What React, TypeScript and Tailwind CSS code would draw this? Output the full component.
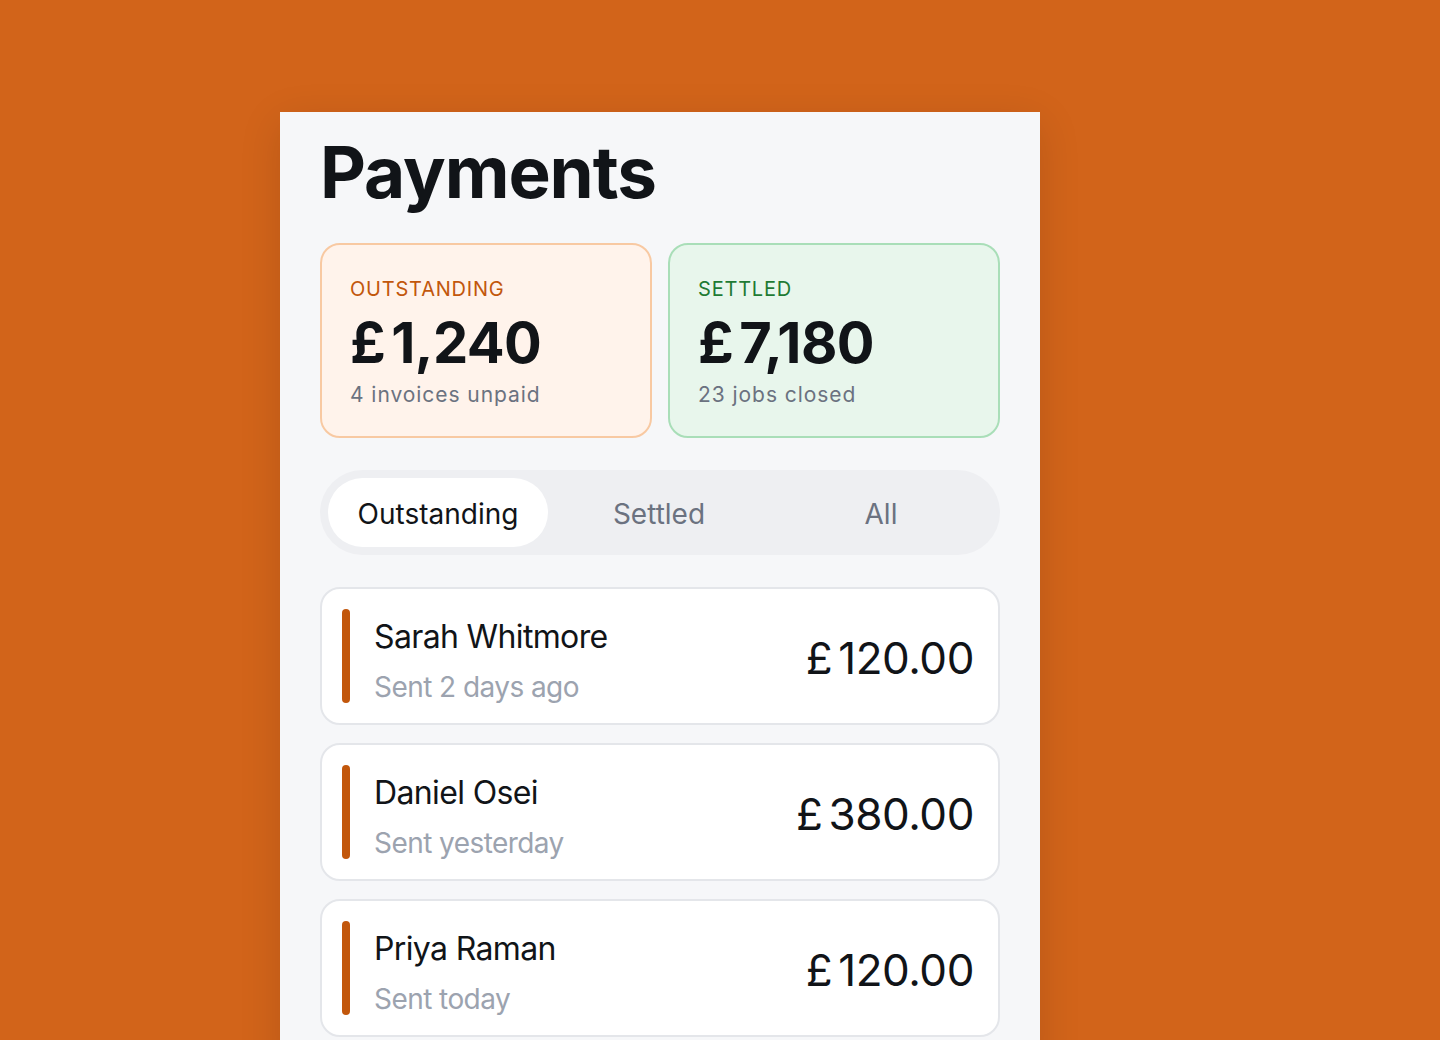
const invoices = [
  { name: "Sarah Whitmore", sent: "Sent 2 days ago", amount: "120.00" },
  { name: "Daniel Osei", sent: "Sent yesterday", amount: "380.00" },
  { name: "Priya Raman", sent: "Sent today", amount: "120.00" },
];

export default function App() {
  return (
    <div
      className="w-[1440px] h-[1040px] overflow-hidden bg-[#D2641A] pt-[112px] pl-[280px]"
      style={{ fontFamily: "Inter, 'Noto Sans', sans-serif" }}
    >
      <div className="w-[760px] h-[960px] bg-[#F6F7F9] px-10 shadow-[0_10px_40px_rgba(0,0,0,0.12)]">
        <h1 className="pt-[20px] text-[71px] leading-[80px] font-bold tracking-[-0.015em] text-[#111418]">
          Payments
        </h1>

        {/* summary cards */}
        <div className="mt-[31px] grid grid-cols-2 gap-4">
          <div className="h-[195px] rounded-[20px] border-2 border-[#F8C9A2] bg-[#FFF3EB] px-[28px] pt-[30px]">
            <div className="text-[20px] leading-[28px] tracking-[0.04em] text-[#C2570C]">OUTSTANDING</div>
            <div className="mt-[8px] text-[56px] leading-[64px] font-bold tracking-[-0.01em] text-[#111418]">
              <span className="mr-[6px]">£</span>1,240
            </div>
            <div className="mt-[6px] text-[21px] leading-[28px] tracking-[0.045em] text-[#6B7280]">4 invoices unpaid</div>
          </div>
          <div className="h-[195px] rounded-[20px] border-2 border-[#A9DEB8] bg-[#E8F6EC] px-[28px] pt-[30px]">
            <div className="text-[20px] leading-[28px] tracking-[0.04em] text-[#1F7A34]">SETTLED</div>
            <div className="mt-[8px] text-[56px] leading-[64px] font-bold tracking-[-0.01em] text-[#111418]">
              <span className="mr-[6px]">£</span>7,180
            </div>
            <div className="mt-[6px] text-[21px] leading-[28px] tracking-[0.045em] text-[#6B7280]">23 jobs closed</div>
          </div>
        </div>

        {/* tabs */}
        <div className="mt-8 flex h-[85px] items-center rounded-full bg-[#EEEFF2] p-2">
          <div className="flex h-full w-[220px] items-center justify-center rounded-full bg-white pt-[3px] text-[28px] text-[#111418]">
            Outstanding
          </div>
          <div className="flex h-full w-[222px] items-center justify-center pt-[3px] text-[28px] text-[#6B7280]">Settled</div>
          <div className="flex h-full flex-1 items-center justify-center pt-[3px] text-[28px] text-[#6B7280]">All</div>
        </div>

        {/* invoice list */}
        <div className="mt-8 flex flex-col gap-[18px]">
          {invoices.map((inv) => (
            <div
              key={inv.name}
              className="flex h-[138px] items-center rounded-[20px] border-2 border-[#E4E6EA] bg-white pl-5 pr-6"
            >
              <div className="h-[94px] w-[8px] rounded-full bg-[#C2570C]" />
              <div className="ml-[24px] mt-[9px] flex-1">
                <div className="text-[32px] leading-[40px] tracking-[-0.02em] text-[#111418]">{inv.name}</div>
                <div className="mt-[12px] text-[28px] leading-[36px] tracking-[-0.02em] text-[#9CA3AF]">{inv.sent}</div>
              </div>
              <div className="mt-[4px] text-[44px] tracking-[-0.01em] text-[#111418]">
                <span className="mr-[6px]">£</span>
                {inv.amount}
              </div>
            </div>
          ))}
        </div>
      </div>
    </div>
  );
}
